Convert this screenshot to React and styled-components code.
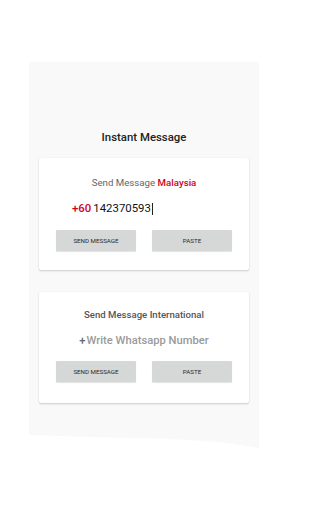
import React from "react";
import styled, { createGlobalStyle } from "styled-components";

const Global = createGlobalStyle`
  html, body { margin: 0; padding: 0; background: #ffffff; }
  body { font-family: Roboto, "Noto Sans", Arial, sans-serif; }
`;

const Page = styled.div`
  width: 288px;
  height: 512px;
  padding-top: 62px;
  box-sizing: border-box;
  display: flex;
  justify-content: center;
`;

const Panel = styled.div`
  width: 230px;
  height: 386px;
  box-sizing: border-box;
  background: #f9f9f9;
  padding: 68px 10px 0;
  display: flex;
  flex-direction: column;
  clip-path: polygon(0 0, 100% 0, 100% 100%, 85% 98.6%, 60% 97.6%, 30% 97.2%, 0 96.6%);
`;

const Heading = styled.h1`
  margin: 0 0 14px;
  font-size: 11.4px;
  line-height: 14px;
  font-weight: 500;
  color: #222;
  text-align: center;
`;

const Card = styled.div`
  background: #ffffff;
  border-radius: 2px;
  box-shadow: 0 1px 2px rgba(0, 0, 0, 0.18), 0 0 1px rgba(0, 0, 0, 0.08);
  padding: ${(p) => p.$pad};
  margin-bottom: ${(p) => p.$mb || "0"};
  display: flex;
  flex-direction: column;
  height: ${(p) => p.$h};
  box-sizing: border-box;
`;

const CardTitle = styled.div`
  font-size: ${(p) => (p.$bold ? "9.6px" : "9.7px")};
  line-height: 14px;
  font-weight: ${(p) => (p.$bold ? 500 : 400)};
  color: ${(p) => (p.$bold ? "#555" : "#666")};
  text-align: center;
`;

const Red = styled.span`
  color: #d0021b;
  font-weight: 500;
`;

const PhoneRow = styled.div`
  margin-top: 11px;
  padding-left: 16px;
  display: flex;
  align-items: center;
  font-size: 11.4px;
  line-height: 15px;
  color: #111;
`;

const Prefix = styled.span`
  color: #d0021b;
  font-weight: 500;
  margin-right: 2px;
`;

const Caret = styled.span`
  display: inline-block;
  width: 1px;
  height: 12px;
  background: #222;
  margin-left: 1px;
`;

const Placeholder = styled.div`
  margin-top: 11px;
  text-align: center;
  font-size: 11.2px;
  line-height: 15px;
  font-weight: 500;
  color: #9a9a9a;
`;

const Plus = styled.span`
  color: #666;
  margin-right: 1px;
`;

const Buttons = styled.div`
  display: flex;
  justify-content: center;
  gap: 16px;
  margin-top: ${(p) => p.$mt};
`;

const Button = styled.button`
  width: 80px;
  height: 21px;
  border: none;
  border-radius: 1px;
  background: #d6d7d7;
  box-shadow: 0 1px 1px rgba(0, 0, 0, 0.12);
  font-family: Roboto, Arial, sans-serif;
  font-size: 6.2px;
  color: #2a2a2a;
  text-transform: uppercase;
  padding: 0;
`;

export default function App() {
  return (
    <>
      <Global />
      <Page>
        <Panel>
          <Heading>Instant Message</Heading>
          <Card $pad="18px 17px 0" $h="112px" $mb="22px">
            <CardTitle>
              Send Message <Red>Malaysia</Red>
            </CardTitle>
            <PhoneRow>
              <Prefix>+60</Prefix>
              <span>142370593</span>
              <Caret />
            </PhoneRow>
            <Buttons $mt="14px">
              <Button>Send Message</Button>
              <Button>Paste</Button>
            </Buttons>
          </Card>
          <Card $pad="16px 17px 0" $h="111px">
            <CardTitle $bold>Send Message International</CardTitle>
            <Placeholder>
              <Plus>+</Plus>Write Whatsapp Number
            </Placeholder>
            <Buttons $mt="13px">
              <Button>Send Message</Button>
              <Button>Paste</Button>
            </Buttons>
          </Card>
        </Panel>
      </Page>
    </>
  );
}
